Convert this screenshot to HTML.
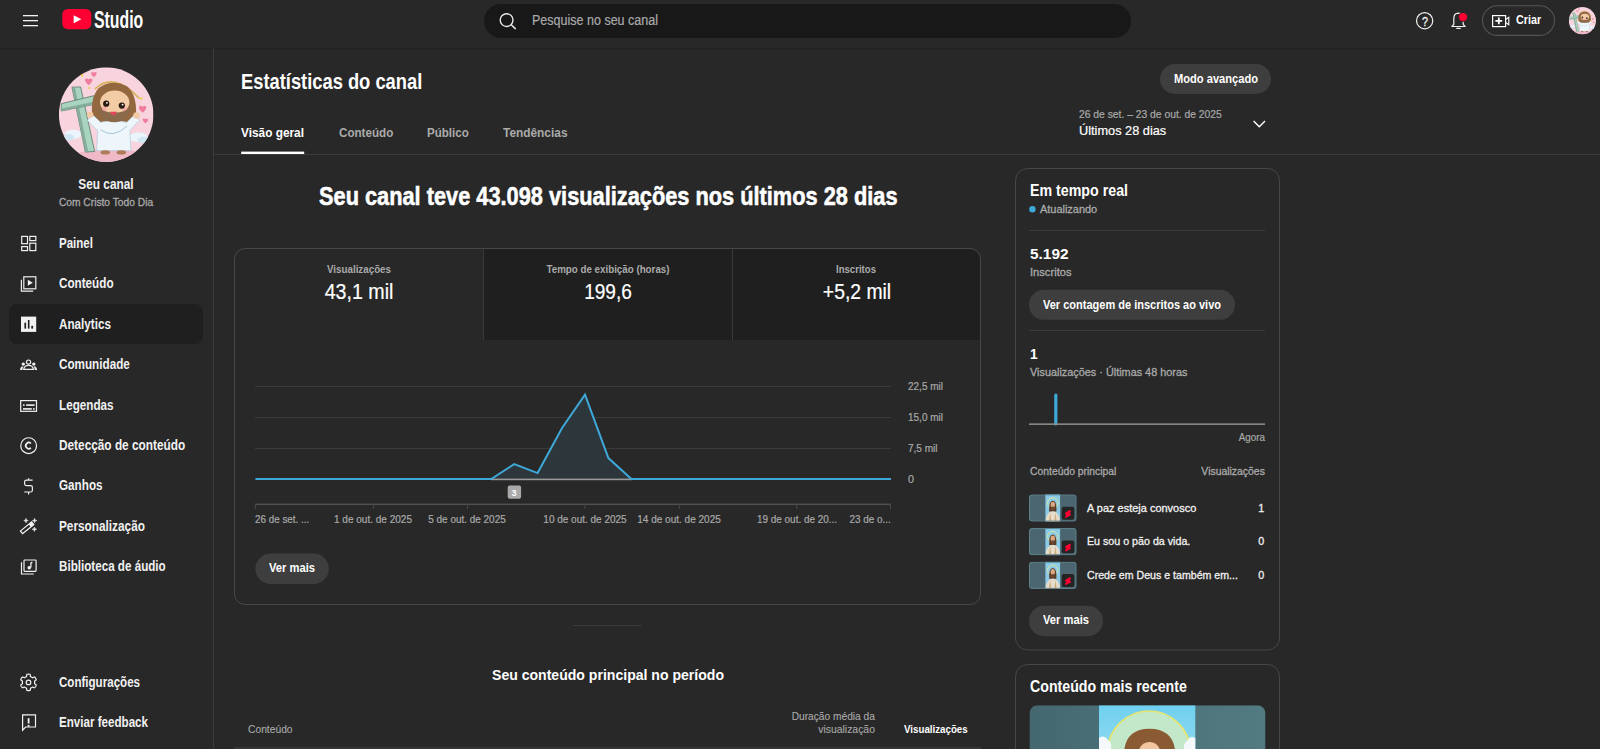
<!DOCTYPE html>
<html><head><meta charset="utf-8"><style>
html,body{margin:0;padding:0;}
body{width:1600px;height:749px;overflow:hidden;background:#282828;position:relative;font-family:"Liberation Sans", sans-serif;}
.t{position:absolute;white-space:nowrap;font-family:"Liberation Sans", sans-serif;}
svg.ov{position:absolute;left:0;top:0;}
</style></head><body>
<svg class="ov" width="1600" height="749" viewBox="0 0 1600 749">
<defs>
<clipPath id="avclip"><circle cx="50" cy="50" r="50"/></clipPath>
<g id="avatar">
 <g clip-path="url(#avclip)">
  <rect x="0" y="0" width="100" height="100" fill="#f7d4de"/>
  <ellipse cx="55" cy="96" rx="45" ry="9" fill="#f0b9c8"/>
  <path d="M38 23 Q58 4 85 33" fill="none" stroke="#d9b35a" stroke-width="1.8"/>
  <ellipse cx="15" cy="71" rx="9" ry="5" fill="#eaf4fa"/><ellipse cx="10" cy="74" rx="6" ry="3.5" fill="#cfe6f3"/>
  <ellipse cx="84" cy="74" rx="10" ry="5" fill="#eaf4fa"/><ellipse cx="90" cy="77" rx="7" ry="3.5" fill="#cfe6f3"/>
  <path d="M13.8 21 L23 20.8 L37.8 89 L28 89.6 Z" fill="#a9d4c0" stroke="#5f7f70" stroke-width="0.9"/>
  <path d="M14 22 L17 21.5 L31 89.5 L28 89.6 Z" fill="#86ad9b"/>
  <path d="M2.5 38.5 L37.1 30 L37.1 39.2 L2.5 46.2 Z" fill="#a9d4c0" stroke="#5f7f70" stroke-width="0.9"/>
  <path d="M2.5 43.5 L37.1 36.5 L37.1 39.2 L2.5 46.2 Z" fill="#86ad9b"/>
  <path d="M36 56 Q32 34 42 22 Q56 12 72 20 Q84 30 81 56 L74 60 L42 60 Z" fill="#94683f"/>
  <path d="M30 56 L36.5 51 L44 58 Q58 55 72 58 L79 51 L85 56 L75 67 L76 88 L40 88 L41 67 Z" fill="#eef6fb" stroke="#a9cde0" stroke-width="0.7"/>
  <circle cx="33" cy="50" r="3.4" fill="#f3c9a3"/>
  <circle cx="82" cy="51" r="3.4" fill="#f3c9a3"/>
  <path d="M44 66 Q58 76 72 62" fill="none" stroke="#9fc2d8" stroke-width="1"/>
  <ellipse cx="59" cy="37" rx="15.5" ry="12.5" fill="#f3cba5"/><circle cx="48" cy="44" r="2.4" fill="#f4a9a8"/><circle cx="70" cy="45" r="2.4" fill="#f4a9a8"/>
  <path d="M41 42 Q44 58 58.5 58 Q73 58 76 42 Q70 48 58.5 48 Q47 48 41 42 Z" fill="#8b6a4b"/>
  <circle cx="50" cy="38.5" r="3.3" fill="#2a1a12"/><circle cx="50.8" cy="37.6" r="1" fill="#fff"/>
  <circle cx="66.5" cy="40.4" r="3.3" fill="#2a1a12"/><circle cx="67.3" cy="39.5" r="1" fill="#fff"/>
  <path d="M54 47 Q57.5 55 61.5 47 Z" fill="#e0485a"/>
  <path d="M27.5 13 q2 -2.5 4 0 q2 -2.5 4 0 q0 3 -4 6 q-4 -3 -4 -6z" fill="#ef7d9c"/>
  <path d="M34 6 q1.5 -2 3 0 q1.5 -2 3 0 q0 2.5 -3 4.5 q-3 -2 -3 -4.5z" fill="#ef7d9c"/>
  <path d="M84.5 42 q2 -2.5 4 0 q2 -2.5 4 0 q0 3 -4 6 q-4 -3 -4 -6z" fill="#ef7d9c"/>
  <path d="M88.5 55 q1.5 -2 3 0 q1.5 -2 3 0 q0 2.5 -3 4.5 q-3 -2 -3 -4.5z" fill="#ef7d9c"/>
  <circle cx="24.5" cy="8.5" r="1.3" fill="#f2cf4a"/><circle cx="32" cy="22" r="1.2" fill="#f2cf4a"/><circle cx="87" cy="33" r="1.4" fill="#f2cf4a"/>
  <ellipse cx="49" cy="90" rx="5" ry="2.2" fill="#b07a56"/>
  <ellipse cx="66" cy="90" rx="5" ry="2.2" fill="#b07a56"/>
 </g>
</g>
<clipPath id="thclip"><rect x="0" y="0" width="47.6" height="27.2" rx="3"/></clipPath>
<g id="thumb">
 <g clip-path="url(#thclip)">
  <rect x="0" y="0" width="47.6" height="27.2" fill="#4b6670"/>
  <rect x="16.4" y="0" width="14.7" height="27.2" fill="#8ccbe6"/>
  <rect x="16.4" y="0" width="14.7" height="1.5" fill="#7fd3f3"/>
  <circle cx="23.8" cy="8.6" r="5.2" fill="none" stroke="#dfe59a" stroke-width="0.9"/>
  <path d="M20.2 17 Q19.6 6.4 23.8 6.4 Q28 6.4 27.4 17 Z" fill="#5e3b24"/>
  <ellipse cx="23.8" cy="10.4" rx="2.2" ry="3" fill="#d9a883"/>
  <path d="M23.8 12.2 Q21.6 12.4 22 15 Q23.8 16.4 25.6 15 Q26 12.4 23.8 12.2 Z" fill="#6b4a32"/>
  <path d="M16.6 27.2 Q16.8 17.6 23.8 16.8 Q30.8 17.6 31 27.2 Z" fill="#e7dccb"/>
  <path d="M20 27.2 L21 18 L22.4 27.2 Z M25.2 27.2 L26.6 18 L27.6 27.2 Z" fill="#c8ad7a"/>
  <rect x="0.5" y="0.5" width="46.6" height="26.2" rx="2.8" fill="none" stroke="#5e808a" stroke-width="1"/>
  <rect x="32.7" y="12.4" width="12.6" height="12.9" rx="2" fill="#242424"/>
  <path d="M40.6 15.6 L36.6 18 Q35.4 19 36.6 20 L37.6 20.6 L36.2 21.6 Q35.4 23 37 23.4 L41.4 21 Q42.6 20 41.4 19 L40.6 18.4 L41.8 17.6 Q42.6 16 40.6 15.6 Z" fill="#ff0033"/>
 </g>
</g>
</defs>
<rect x="0" y="48" width="1600" height="1" fill="#222"/><rect x="0" y="49" width="1600" height="1" fill="#252525"/><rect x="23" y="15" width="15" height="1.3" fill="#f1f1f1"/><rect x="23" y="20" width="15" height="1.3" fill="#f1f1f1"/><rect x="23" y="25" width="15" height="1.3" fill="#f1f1f1"/><rect x="62.3" y="8.9" width="29" height="20.3" rx="5.5" fill="#ff0033"/><path d="M73.7 15.3 L81.4 19.3 L73.7 23.3 Z" fill="#fff"/><rect x="484" y="4" width="647" height="34" rx="17" fill="#181818"/><circle cx="506.6" cy="20.1" r="6.4" fill="none" stroke="#e8e8e8" stroke-width="1.4"/><path d="M511.2 24.7 L515.3 28.6" stroke="#e8e8e8" stroke-width="1.5" stroke-linecap="round"/><circle cx="1424.65" cy="20.7" r="8.1" fill="none" stroke="#f1f1f1" stroke-width="1.2"/><path d="M1451.9 26.5 H1465.1 L1463.2 24.3 V18.6 Q1463.2 13.4 1458.5 13.2 Q1453.8 13.4 1453.8 18.6 V24.3 Z" fill="none" stroke="#f1f1f1" stroke-width="1.2" stroke-linejoin="round"/><path d="M1456.9 28.4 H1460.1" stroke="#f1f1f1" stroke-width="1.4" stroke-linecap="round"/><circle cx="1463" cy="17" r="4.9" fill="#282828"/><circle cx="1463" cy="17.05" r="4.15" fill="#ff0033"/><rect x="1482.5" y="5.8" width="72" height="29.6" rx="14.8" fill="none" stroke="#545454" stroke-width="1.1"/><rect x="1492.6" y="15.6" width="13" height="11" fill="none" stroke="#fff" stroke-width="1.2"/><path d="M1505.6 19.5 L1508.8 17.2 L1508.8 24.8 L1505.6 22.5" fill="none" stroke="#fff" stroke-width="1.1"/><path d="M1498.8 17.6 V24.2 M1495.4 20.9 H1502.2" stroke="#fff" stroke-width="1.8"/><g transform="translate(1568.8,7.05) scale(0.272)"><use href="#avatar"/></g><rect x="213" y="48" width="1" height="701" fill="#3a3a3a"/><g transform="translate(58.9,67.3) scale(0.946)"><use href="#avatar"/></g><rect x="9" y="304" width="194" height="40" rx="8" fill="#1f1f1f"/><g fill="none" stroke="#f1f1f1" stroke-width="1.2"><rect x="21.7" y="236.4" width="5.8" height="7.3"/><rect x="21.7" y="246.60000000000002" width="5.8" height="4"/><rect x="29.8" y="236.4" width="6" height="4.2"/><rect x="29.8" y="243.20000000000002" width="6" height="7.4"/></g><g fill="none" stroke="#f1f1f1" stroke-width="1.2"><rect x="23.8" y="276.8" width="12" height="12"/><path d="M21.4 279.8 V291.2 H33.2"/></g><path d="M27.8 279.8 L32.8 282.8 L27.8 285.8 Z" fill="#f1f1f1"/><rect x="21" y="316.6" width="15.2" height="15.3" fill="#f1f1f1"/><g fill="#1f1f1f"><rect x="24.4" y="322.7" width="1.7" height="5.9"/><rect x="27.9" y="320" width="1.6" height="8.6"/><rect x="31.3" y="325.8" width="1.8" height="2.8"/></g><g fill="none" stroke="#f1f1f1" stroke-width="1.2"><circle cx="28.55" cy="362.1" r="2.1"/><path d="M23.7 369.3 Q24.2 365.3 28.55 365.3 Q32.9 365.3 33.4 369.3 Z"/></g><g fill="#f1f1f1"><circle cx="23.3" cy="364.1" r="1.7"/><circle cx="33.8" cy="364.1" r="1.7"/><path d="M20 369.9 Q20.3 366.4 23.2 366.2 Q22.6 368 22.4 369.9 Z"/><path d="M37.1 369.9 Q36.8 366.4 33.9 366.2 Q34.5 368 34.7 369.9 Z"/></g><rect x="20.7" y="400.6" width="15.8" height="10.7" fill="none" stroke="#f1f1f1" stroke-width="1.2"/><g fill="#f1f1f1"><rect x="23" y="404.3" width="1.6" height="1.6"/><rect x="26.2" y="404.3" width="8.4" height="1.6"/><rect x="23" y="408.1" width="8.8" height="1.6"/><rect x="33" y="408.1" width="1.6" height="1.6"/></g><circle cx="28.65" cy="445.65" r="7.9" fill="none" stroke="#f1f1f1" stroke-width="1.2"/><path d="M30.9 443.5 A3 3 0 1 0 30.9 447.8" fill="none" stroke="#f1f1f1" stroke-width="1.7"/><path d="M32.6 480.2 H26.4 Q24.6 480.2 24.6 482 V483.8 Q24.6 485.6 26.4 485.6 H30.6 Q32.4 485.6 32.4 487.4 V490.2 Q32.4 492 30.6 492 H24.2 M28.6 478.2 V480.2 M28.6 492 V494.4" fill="none" stroke="#f1f1f1" stroke-width="1.2"/><path d="M26 518.4 Q26 520.6 28.2 520.6 Q26 520.6 26 522.8000000000001 Q26 520.6 23.8 520.6 Q26 520.6 26 518.4 Z" fill="#f1f1f1" stroke="#f1f1f1" stroke-width="0.6"/><path d="M34.6 518.4 Q34.6 520.6 36.800000000000004 520.6 Q34.6 520.6 34.6 522.8000000000001 Q34.6 520.6 32.4 520.6 Q34.6 520.6 34.6 518.4 Z" fill="#f1f1f1" stroke="#f1f1f1" stroke-width="0.6"/><path d="M34.4 527.0 Q34.4 529.2 36.6 529.2 Q34.4 529.2 34.4 531.4000000000001 Q34.4 529.2 32.199999999999996 529.2 Q34.4 529.2 34.4 527.0 Z" fill="#f1f1f1" stroke="#f1f1f1" stroke-width="0.6"/><g transform="translate(27.1,527.8) rotate(-39)"><rect x="-7.2" y="-1.7" width="14.4" height="3.4" fill="none" stroke="#f1f1f1" stroke-width="1.2"/><rect x="3.4" y="-1.7" width="3.8" height="3.4" fill="#f1f1f1"/></g><g fill="none" stroke="#f1f1f1" stroke-width="1.2"><rect x="24.0" y="560.0" width="12.1" height="11.3" rx="0.8"/><path d="M21.5 562.2 V574 H33.8"/></g><path d="M30.9 567.4 V563.2 Q31.2 562.3 32.4 562.6" fill="none" stroke="#f1f1f1" stroke-width="1.3"/><circle cx="29.2" cy="567.7" r="1.75" fill="#f1f1f1"/><path d="M34.60 682.40 L34.60 682.61 L34.59 682.83 L34.57 683.04 L34.54 683.25 L34.51 683.46 L34.59 683.69 L35.08 684.04 L35.73 684.47 L36.18 684.90 L36.21 685.20 L36.10 685.47 L35.99 685.74 L35.87 685.99 L35.74 686.25 L35.60 686.50 L35.45 686.75 L35.30 686.99 L35.13 687.22 L34.96 687.45 L34.78 687.67 L34.50 687.80 L33.91 687.62 L33.21 687.28 L32.67 687.03 L32.42 687.07 L32.26 687.21 L32.09 687.34 L31.91 687.46 L31.73 687.57 L31.55 687.68 L31.36 687.79 L31.17 687.88 L30.98 687.97 L30.79 688.06 L30.59 688.13 L30.42 688.32 L30.37 688.92 L30.32 689.69 L30.18 690.30 L29.92 690.48 L29.64 690.52 L29.36 690.56 L29.07 690.58 L28.79 690.60 L28.50 690.60 L28.21 690.60 L27.93 690.58 L27.64 690.56 L27.36 690.52 L27.08 690.48 L26.82 690.30 L26.68 689.69 L26.63 688.92 L26.58 688.32 L26.41 688.13 L26.21 688.06 L26.02 687.97 L25.83 687.88 L25.64 687.79 L25.45 687.68 L25.27 687.57 L25.09 687.46 L24.91 687.34 L24.74 687.21 L24.58 687.07 L24.33 687.03 L23.79 687.28 L23.09 687.62 L22.50 687.80 L22.22 687.67 L22.04 687.45 L21.87 687.22 L21.70 686.99 L21.55 686.75 L21.40 686.50 L21.26 686.25 L21.13 685.99 L21.01 685.74 L20.90 685.47 L20.79 685.20 L20.82 684.90 L21.27 684.47 L21.92 684.04 L22.41 683.69 L22.49 683.46 L22.46 683.25 L22.43 683.04 L22.41 682.83 L22.40 682.61 L22.40 682.40 L22.40 682.19 L22.41 681.97 L22.43 681.76 L22.46 681.55 L22.49 681.34 L22.41 681.11 L21.92 680.76 L21.27 680.33 L20.82 679.90 L20.79 679.60 L20.90 679.33 L21.01 679.06 L21.13 678.81 L21.26 678.55 L21.40 678.30 L21.55 678.05 L21.70 677.81 L21.87 677.58 L22.04 677.35 L22.22 677.13 L22.50 677.00 L23.09 677.18 L23.79 677.52 L24.33 677.77 L24.58 677.73 L24.74 677.59 L24.91 677.46 L25.09 677.34 L25.27 677.23 L25.45 677.12 L25.64 677.01 L25.83 676.92 L26.02 676.83 L26.21 676.74 L26.41 676.67 L26.58 676.48 L26.63 675.88 L26.68 675.11 L26.82 674.50 L27.08 674.32 L27.36 674.28 L27.64 674.24 L27.93 674.22 L28.21 674.20 L28.50 674.20 L28.79 674.20 L29.07 674.22 L29.36 674.24 L29.64 674.28 L29.92 674.32 L30.18 674.50 L30.32 675.11 L30.37 675.88 L30.42 676.48 L30.59 676.67 L30.79 676.74 L30.98 676.83 L31.17 676.92 L31.36 677.01 L31.55 677.12 L31.73 677.23 L31.91 677.34 L32.09 677.46 L32.26 677.59 L32.42 677.73 L32.67 677.77 L33.21 677.52 L33.91 677.18 L34.50 677.00 L34.78 677.13 L34.96 677.35 L35.13 677.58 L35.30 677.81 L35.45 678.05 L35.60 678.30 L35.74 678.55 L35.87 678.81 L35.99 679.06 L36.10 679.33 L36.21 679.60 L36.18 679.90 L35.73 680.33 L35.08 680.76 L34.59 681.11 L34.51 681.34 L34.54 681.55 L34.57 681.76 L34.59 681.97 L34.60 682.19 Z" fill="none" stroke="#f1f1f1" stroke-width="1.2" stroke-linejoin="round"/><circle cx="28.5" cy="682.4" r="2.3" fill="none" stroke="#f1f1f1" stroke-width="1.2"/><path d="M22.6 714.9 H35.5 V727 H25.6 L22.6 730.2 Z" fill="none" stroke="#f1f1f1" stroke-width="1.2" stroke-linejoin="miter"/><rect x="27.7" y="718.2" width="1.8" height="5.3" fill="#f1f1f1"/><rect x="27.7" y="724.9" width="1.8" height="1.8" fill="#f1f1f1"/><rect x="241.2" y="151.6" width="63" height="3" fill="#fff"/><rect x="214" y="154" width="1386" height="1" fill="#3a3a3a"/><rect x="1160" y="64" width="111" height="30" rx="15" fill="#3e3e3e"/><path d="M1253.6 121 L1259.3 126.8 L1265 121" fill="none" stroke="#fff" stroke-width="1.4"/><path d="M484 249 H970 Q980 249 980 259 V340 H484 Z" fill="#1f1f1f"/><rect x="483" y="249" width="1" height="91" fill="#3a3a3a"/><rect x="732" y="249" width="1" height="91" fill="#3a3a3a"/><rect x="234.5" y="248.5" width="746" height="356" rx="10.5" fill="none" stroke="#474747" stroke-width="1"/><rect x="255" y="386.0" width="636" height="1" fill="#3a3a3a"/><rect x="255" y="417.0" width="636" height="1" fill="#3a3a3a"/><rect x="255" y="448.0" width="636" height="1" fill="#3a3a3a"/><path d="M491.2 479.1 L514.2 464.1 L537.6 473.1 L561.9 428.2 L585 394.6 L608.4 458.1 L631.4 479.1 Z" fill="#2c363b"/><rect x="491" y="478.6" width="141" height="1.6" fill="#9a9a9a"/><path d="M255.4 479.1 L491.2 479.1 L514.2 464.1 L537.6 473.1 L561.9 428.2 L585 394.6 L608.4 458.1 L631.4 479.1 L891 479.1" fill="none" stroke="#3ea8d8" stroke-width="2" stroke-linejoin="miter"/><rect x="255" y="503.6" width="636" height="1.5" fill="#505050"/><rect x="254.9" y="504" width="1" height="5" fill="#4a4a4a"/><rect x="372.9" y="504" width="1" height="5" fill="#4a4a4a"/><rect x="466.9" y="504" width="1" height="5" fill="#4a4a4a"/><rect x="584.4" y="504" width="1" height="5" fill="#4a4a4a"/><rect x="678.8" y="504" width="1" height="5" fill="#4a4a4a"/><rect x="796.3" y="504" width="1" height="5" fill="#4a4a4a"/><rect x="890.0" y="504" width="1" height="5" fill="#4a4a4a"/><rect x="507.7" y="485.6" width="13.4" height="13.1" rx="2" fill="#a9a9a9"/><rect x="255.4" y="553.4" width="73.4" height="30.6" rx="15.3" fill="#3e3e3e"/><rect x="573" y="625" width="69" height="1" fill="#3a3a3a"/><rect x="234" y="747" width="747" height="2" fill="#363636"/><rect x="1015.5" y="168.5" width="264" height="481.5" rx="12" fill="none" stroke="#474747" stroke-width="1"/><circle cx="1032.4" cy="209.3" r="3.2" fill="#3ea8d8"/><rect x="1029" y="230" width="236" height="1" fill="#3a3a3a"/><rect x="1029" y="289.8" width="206" height="30" rx="15" fill="#3e3e3e"/><rect x="1029" y="330" width="236" height="1" fill="#3a3a3a"/><path d="M1055.8 424 V395" stroke="#3ea8d8" stroke-width="3.2" stroke-linecap="round"/><rect x="1029" y="423.4" width="236" height="1.5" fill="#909090"/><g transform="translate(1029,494.4)"><use href="#thumb"/></g><g transform="translate(1029,528.05)"><use href="#thumb"/></g><g transform="translate(1029,561.6999999999999)"><use href="#thumb"/></g><rect x="1029" y="605.7" width="74" height="30.5" rx="15.25" fill="#3e3e3e"/><rect x="1015.5" y="664.5" width="264" height="200" rx="12" fill="none" stroke="#474747" stroke-width="1"/><clipPath id="rc2"><rect x="1029.5" y="705.3" width="236" height="80" rx="8"/></clipPath><linearGradient id="tealg" x1="0" x2="1" y1="0" y2="0"><stop offset="0" stop-color="#456870"/><stop offset="1" stop-color="#527b81"/></linearGradient><linearGradient id="skyg" x1="0" x2="0" y1="0" y2="1"><stop offset="0" stop-color="#6fd0f0"/><stop offset="1" stop-color="#a8e0ee"/></linearGradient><g clip-path="url(#rc2)"><rect x="1029.5" y="705.3" width="236" height="80" fill="url(#tealg)"/><rect x="1099" y="705.3" width="96.3" height="80" fill="url(#skyg)"/><circle cx="1149" cy="752.5" r="41.5" fill="#c3e7c9" stroke="#e6e46c" stroke-width="1.6"/><path d="M1099 738 Q1104 734 1108 740 Q1112 742 1111 749 L1099 749 Z" fill="#f4f8fb"/><path d="M1195.3 738 Q1190 735 1187 741 Q1183 743 1184 749 L1195.3 749 Z" fill="#f4f8fb"/><path d="M1124 760 Q1122 729 1149.5 728.8 Q1177 729 1175.5 760 Z" fill="#8a5a32"/><path d="M1137 760 Q1138 742 1149.5 742 Q1161 742 1162 760 Z" fill="#f1c6a0"/></g></svg>
<span class="t" id="t0" style="top:4.40px;font-size:24.5px;line-height:32px;font-weight:700;color:#fff;left:94.30px;transform:scaleX(0.6455);transform-origin:left;">Studio</span><span class="t" id="t1" style="top:10.60px;font-size:14px;line-height:19px;font-weight:400;color:#aaaaaa;left:532.00px;transform:scaleX(0.8944);transform-origin:left;-webkit-text-stroke:0.2px #aaaaaa;">Pesquise no seu canal</span><span class="t" id="t2" style="top:13.00px;font-size:13px;line-height:17px;font-weight:400;color:#f1f1f1;left:1424.70px;transform:translateX(-50%) scaleX(0.8294);transform-origin:center;-webkit-text-stroke:0.3px #f1f1f1;">?</span><span class="t" id="t3" style="top:11.80px;font-size:12.5px;line-height:17px;font-weight:700;color:#fff;left:1515.80px;transform:scaleX(0.8600);transform-origin:left;">Criar</span><span class="t" id="t4" style="top:174.50px;font-size:14.5px;line-height:19px;font-weight:700;color:#f1f1f1;left:105.70px;transform:translateX(-50%) scaleX(0.8168);transform-origin:center;">Seu canal</span><span class="t" id="t5" style="top:195.10px;font-size:11.3px;line-height:15px;font-weight:400;color:#aaaaaa;left:106.00px;transform:translateX(-50%) scaleX(0.9056);transform-origin:center;-webkit-text-stroke:0.3px #aaa;">Com Cristo Todo Dia</span><span class="t" id="t6" style="top:234.00px;font-size:14px;line-height:19px;font-weight:700;color:#f1f1f1;left:59.30px;transform:scaleX(0.8218);transform-origin:left;">Painel</span><span class="t" id="t7" style="top:274.38px;font-size:14px;line-height:19px;font-weight:700;color:#f1f1f1;left:59.30px;transform:scaleX(0.8350);transform-origin:left;">Conteúdo</span><span class="t" id="t8" style="top:314.75px;font-size:14px;line-height:19px;font-weight:700;color:#f1f1f1;left:59.30px;transform:scaleX(0.8350);transform-origin:left;">Analytics</span><span class="t" id="t9" style="top:355.12px;font-size:14px;line-height:19px;font-weight:700;color:#f1f1f1;left:59.30px;transform:scaleX(0.8350);transform-origin:left;">Comunidade</span><span class="t" id="t10" style="top:395.50px;font-size:14px;line-height:19px;font-weight:700;color:#f1f1f1;left:59.30px;transform:scaleX(0.8350);transform-origin:left;">Legendas</span><span class="t" id="t11" style="top:435.88px;font-size:14px;line-height:19px;font-weight:700;color:#f1f1f1;left:59.30px;transform:scaleX(0.8449);transform-origin:left;">Detecção de conteúdo</span><span class="t" id="t12" style="top:476.25px;font-size:14px;line-height:19px;font-weight:700;color:#f1f1f1;left:59.30px;transform:scaleX(0.8350);transform-origin:left;">Ganhos</span><span class="t" id="t13" style="top:516.62px;font-size:14px;line-height:19px;font-weight:700;color:#f1f1f1;left:59.30px;transform:scaleX(0.8427);transform-origin:left;">Personalização</span><span class="t" id="t14" style="top:557.00px;font-size:14px;line-height:19px;font-weight:700;color:#f1f1f1;left:59.30px;transform:scaleX(0.8313);transform-origin:left;">Biblioteca de áudio</span><span class="t" id="t15" style="top:672.90px;font-size:14px;line-height:19px;font-weight:700;color:#f1f1f1;left:59.30px;transform:scaleX(0.8264);transform-origin:left;">Configurações</span><span class="t" id="t16" style="top:713.10px;font-size:14px;line-height:19px;font-weight:700;color:#f1f1f1;left:59.30px;transform:scaleX(0.8288);transform-origin:left;">Enviar feedback</span><span class="t" id="t17" style="top:66.75px;font-size:21.8px;line-height:29px;font-weight:700;color:#fff;left:241.25px;transform:scaleX(0.8405);transform-origin:left;">Estatísticas do canal</span><span class="t" id="t18" style="top:124.30px;font-size:13.6px;line-height:18px;font-weight:700;color:#fff;left:241.20px;transform:scaleX(0.8714);transform-origin:left;">Visão geral</span><span class="t" id="t19" style="top:124.30px;font-size:13.6px;line-height:18px;font-weight:700;color:#aaaaaa;left:338.50px;transform:scaleX(0.8560);transform-origin:left;">Conteúdo</span><span class="t" id="t20" style="top:124.30px;font-size:13.6px;line-height:18px;font-weight:700;color:#aaaaaa;left:427.00px;transform:scaleX(0.8504);transform-origin:left;">Público</span><span class="t" id="t21" style="top:124.30px;font-size:13.6px;line-height:18px;font-weight:700;color:#aaaaaa;left:503.00px;transform:scaleX(0.8740);transform-origin:left;">Tendências</span><span class="t" id="t22" style="top:69.80px;font-size:13px;line-height:17px;font-weight:700;color:#fff;left:1173.75px;transform:scaleX(0.8550);transform-origin:left;">Modo avançado</span><span class="t" id="t23" style="top:106.00px;font-size:11.6px;line-height:16px;font-weight:400;color:#aaaaaa;left:1079.00px;transform:scaleX(0.8896);transform-origin:left;-webkit-text-stroke:0.2px #aaaaaa;">26 de set. – 23 de out. de 2025</span><span class="t" id="t24" style="top:122.00px;font-size:13.4px;line-height:18px;font-weight:400;color:#fff;left:1079.00px;transform:scaleX(0.9525);transform-origin:left;-webkit-text-stroke:0.2px #fff;">Últimos 28 dias</span><span class="t" id="t25" style="top:180.10px;font-size:25.2px;line-height:33px;font-weight:700;color:#fff;left:318.50px;transform:scaleX(0.8645);transform-origin:left;-webkit-text-stroke:0.55px #fff;">Seu canal teve 43.098 visualizações nos últimos 28 dias</span><span class="t" id="t26" style="top:261.70px;font-size:11.3px;line-height:15px;font-weight:700;color:#aaaaaa;left:359.00px;transform:translateX(-50%) scaleX(0.8660);transform-origin:center;">Visualizações</span><span class="t" id="t27" style="top:261.70px;font-size:11.3px;line-height:15px;font-weight:700;color:#aaaaaa;left:607.75px;transform:translateX(-50%) scaleX(0.8644);transform-origin:center;">Tempo de exibição (horas)</span><span class="t" id="t28" style="top:261.70px;font-size:11.3px;line-height:15px;font-weight:700;color:#aaaaaa;left:856.25px;transform:translateX(-50%) scaleX(0.8494);transform-origin:center;">Inscritos</span><span class="t" id="t29" style="top:278.25px;font-size:21.4px;line-height:28px;font-weight:400;color:#fff;left:359.40px;transform:translateX(-50%) scaleX(0.9178);transform-origin:center;-webkit-text-stroke:0.2px #fff;">43,1 mil</span><span class="t" id="t30" style="top:278.25px;font-size:21.4px;line-height:28px;font-weight:400;color:#fff;left:608.10px;transform:translateX(-50%) scaleX(0.8920);transform-origin:center;-webkit-text-stroke:0.2px #fff;">199,6</span><span class="t" id="t31" style="top:278.25px;font-size:21.4px;line-height:28px;font-weight:400;color:#fff;left:856.60px;transform:translateX(-50%) scaleX(0.9040);transform-origin:center;-webkit-text-stroke:0.2px #fff;">+5,2 mil</span><span class="t" id="t32" style="top:486.60px;font-size:9px;line-height:12px;font-weight:700;color:#fff;left:514.40px;transform:translateX(-50%) scaleX(0.9969);transform-origin:center;">3</span><span class="t" id="t33" style="top:379.10px;font-size:11px;line-height:15px;font-weight:400;color:#aaaaaa;left:908.00px;transform:scaleX(0.9084);transform-origin:left;-webkit-text-stroke:0.2px #aaaaaa;">22,5 mil</span><span class="t" id="t34" style="top:409.80px;font-size:11px;line-height:15px;font-weight:400;color:#aaaaaa;left:908.00px;transform:scaleX(0.9084);transform-origin:left;-webkit-text-stroke:0.2px #aaaaaa;">15,0 mil</span><span class="t" id="t35" style="top:440.80px;font-size:11px;line-height:15px;font-weight:400;color:#aaaaaa;left:908.00px;transform:scaleX(0.9103);transform-origin:left;-webkit-text-stroke:0.2px #aaaaaa;">7,5 mil</span><span class="t" id="t36" style="top:471.60px;font-size:11px;line-height:15px;font-weight:400;color:#aaaaaa;left:908.00px;transform:scaleX(0.9796);transform-origin:left;-webkit-text-stroke:0.2px #aaaaaa;">0</span><span class="t" id="t37" style="top:512.20px;font-size:11px;line-height:15px;font-weight:400;color:#aaaaaa;left:255.40px;transform:scaleX(0.8952);transform-origin:left;-webkit-text-stroke:0.2px #aaaaaa;">26 de set. ...</span><span class="t" id="t38" style="top:512.20px;font-size:11px;line-height:15px;font-weight:400;color:#aaaaaa;left:373.10px;transform:translateX(-50%) scaleX(0.9108);transform-origin:center;-webkit-text-stroke:0.2px #aaaaaa;">1 de out. de 2025</span><span class="t" id="t39" style="top:512.20px;font-size:11px;line-height:15px;font-weight:400;color:#aaaaaa;left:467.10px;transform:translateX(-50%) scaleX(0.9038);transform-origin:center;-webkit-text-stroke:0.2px #aaaaaa;">5 de out. de 2025</span><span class="t" id="t40" style="top:512.20px;font-size:11px;line-height:15px;font-weight:400;color:#aaaaaa;left:584.85px;transform:translateX(-50%) scaleX(0.9079);transform-origin:center;-webkit-text-stroke:0.2px #aaaaaa;">10 de out. de 2025</span><span class="t" id="t41" style="top:512.20px;font-size:11px;line-height:15px;font-weight:400;color:#aaaaaa;left:679.20px;transform:translateX(-50%) scaleX(0.9112);transform-origin:center;-webkit-text-stroke:0.2px #aaaaaa;">14 de out. de 2025</span><span class="t" id="t42" style="top:512.20px;font-size:11px;line-height:15px;font-weight:400;color:#aaaaaa;left:796.90px;transform:translateX(-50%) scaleX(0.8998);transform-origin:center;-webkit-text-stroke:0.2px #aaaaaa;">19 de out. de 20...</span><span class="t" id="t43" style="top:512.20px;font-size:11px;line-height:15px;font-weight:400;color:#aaaaaa;right:709.00px;transform:scaleX(0.9003);transform-origin:right;-webkit-text-stroke:0.2px #aaaaaa;">23 de o...</span><span class="t" id="t44" style="top:559.80px;font-size:12.6px;line-height:17px;font-weight:700;color:#fff;left:269.00px;transform:scaleX(0.8875);transform-origin:left;">Ver mais</span><span class="t" id="t45" style="top:663.90px;font-size:15.4px;line-height:21px;font-weight:700;color:#fff;left:491.70px;transform:scaleX(0.9136);transform-origin:left;">Seu conteúdo principal no período</span><span class="t" id="t46" style="top:721.70px;font-size:11px;line-height:15px;font-weight:400;color:#aaaaaa;left:247.60px;transform:scaleX(0.9346);transform-origin:left;-webkit-text-stroke:0.1px #aaa;">Conteúdo</span><span class="t" id="t47" style="top:709.20px;font-size:11px;line-height:15px;font-weight:400;color:#aaaaaa;right:725.25px;transform:scaleX(0.9261);transform-origin:right;-webkit-text-stroke:0.1px #aaa;">Duração média da</span><span class="t" id="t48" style="top:721.70px;font-size:11px;line-height:15px;font-weight:400;color:#aaaaaa;right:725.25px;transform:scaleX(0.9462);transform-origin:right;-webkit-text-stroke:0.1px #aaa;">visualização</span><span class="t" id="t49" style="top:721.70px;font-size:11px;line-height:15px;font-weight:700;color:#fff;left:904.00px;transform:scaleX(0.8853);transform-origin:left;">Visualizações</span><span class="t" id="t50" style="top:179.00px;font-size:16.4px;line-height:22px;font-weight:700;color:#fff;left:1029.50px;transform:scaleX(0.8676);transform-origin:left;">Em tempo real</span><span class="t" id="t51" style="top:201.80px;font-size:11.3px;line-height:15px;font-weight:400;color:#aaaaaa;left:1039.80px;transform:scaleX(0.9687);transform-origin:left;-webkit-text-stroke:0.3px #aaa;">Atualizando</span><span class="t" id="t52" style="top:243.70px;font-size:15px;line-height:20px;font-weight:700;color:#fff;left:1029.50px;transform:scaleX(1.0254);transform-origin:left;">5.192</span><span class="t" id="t53" style="top:265.00px;font-size:11.3px;line-height:15px;font-weight:400;color:#aaaaaa;left:1029.50px;transform:scaleX(0.9866);transform-origin:left;-webkit-text-stroke:0.3px #aaa;">Inscritos</span><span class="t" id="t54" style="top:295.50px;font-size:13px;line-height:17px;font-weight:700;color:#fff;left:1043.00px;transform:scaleX(0.8466);transform-origin:left;">Ver contagem de inscritos ao vivo</span><span class="t" id="t55" style="top:344.40px;font-size:15px;line-height:20px;font-weight:700;color:#fff;left:1030.00px;transform:scaleX(0.9109);transform-origin:left;">1</span><span class="t" id="t56" style="top:365.10px;font-size:11.3px;line-height:15px;font-weight:400;color:#aaaaaa;left:1029.60px;transform:scaleX(0.9617);transform-origin:left;-webkit-text-stroke:0.3px #aaa;">Visualizações · Últimas 48 horas</span><span class="t" id="t57" style="top:430.20px;font-size:11.2px;line-height:15px;font-weight:400;color:#aaaaaa;right:335.00px;transform:scaleX(0.8774);transform-origin:right;-webkit-text-stroke:0.2px #aaaaaa;">Agora</span><span class="t" id="t58" style="top:463.50px;font-size:11.3px;line-height:15px;font-weight:400;color:#aaaaaa;left:1029.60px;transform:scaleX(0.9170);transform-origin:left;-webkit-text-stroke:0.3px #aaa;">Conteúdo principal</span><span class="t" id="t59" style="top:463.50px;font-size:11.3px;line-height:15px;font-weight:400;color:#aaaaaa;right:335.00px;transform:scaleX(0.9220);transform-origin:right;-webkit-text-stroke:0.3px #aaa;">Visualizações</span><span class="t" id="t60" style="top:500.50px;font-size:11.2px;line-height:15px;font-weight:400;color:#f1f1f1;left:1086.70px;transform:scaleX(0.9818);transform-origin:left;-webkit-text-stroke:0.3px #f1f1f1;">A paz esteja convosco</span><span class="t" id="t61" style="top:500.50px;font-size:11.2px;line-height:15px;font-weight:400;color:#f1f1f1;right:335.50px;transform:scaleX(0.9624);transform-origin:right;-webkit-text-stroke:0.3px #f1f1f1;">1</span><span class="t" id="t62" style="top:534.10px;font-size:11.2px;line-height:15px;font-weight:400;color:#f1f1f1;left:1086.70px;transform:scaleX(0.9544);transform-origin:left;-webkit-text-stroke:0.3px #f1f1f1;">Eu sou o pão da vida.</span><span class="t" id="t63" style="top:534.10px;font-size:11.2px;line-height:15px;font-weight:400;color:#f1f1f1;right:335.50px;transform:scaleX(0.9624);transform-origin:right;-webkit-text-stroke:0.3px #f1f1f1;">0</span><span class="t" id="t64" style="top:567.70px;font-size:11.2px;line-height:15px;font-weight:400;color:#f1f1f1;left:1086.70px;transform:scaleX(0.9480);transform-origin:left;-webkit-text-stroke:0.3px #f1f1f1;">Crede em Deus e também em...</span><span class="t" id="t65" style="top:567.70px;font-size:11.2px;line-height:15px;font-weight:400;color:#f1f1f1;right:335.50px;transform:scaleX(0.9624);transform-origin:right;-webkit-text-stroke:0.3px #f1f1f1;">0</span><span class="t" id="t66" style="top:611.70px;font-size:12.6px;line-height:17px;font-weight:700;color:#fff;left:1043.00px;transform:scaleX(0.8875);transform-origin:left;">Ver mais</span><span class="t" id="t67" style="top:675.00px;font-size:16.3px;line-height:22px;font-weight:700;color:#fff;left:1029.50px;transform:scaleX(0.8709);transform-origin:left;">Conteúdo mais recente</span>
</body></html>
